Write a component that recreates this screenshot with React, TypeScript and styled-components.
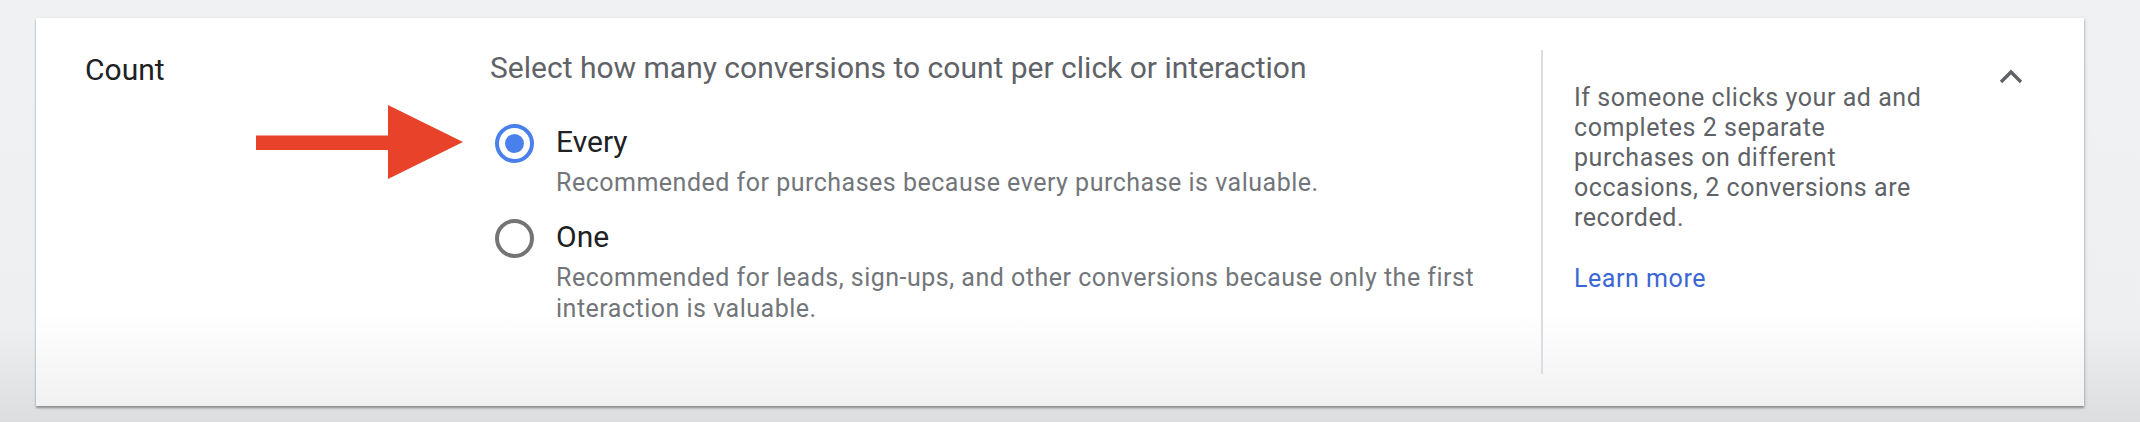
import React from "react";
import styled, { createGlobalStyle } from "styled-components";

const GlobalStyle = createGlobalStyle`
  html, body {
    margin: 0;
    padding: 0;
  }
  body {
    font-family: Roboto, "Noto Sans", "Liberation Sans", sans-serif;
    background: linear-gradient(to bottom, #f0f1f2 0%, #eeeff0 78%, #dcdddf 100%);
  }
`;

const Page = styled.div`
  width: 2140px;
  height: 422px;
  box-sizing: border-box;
  padding: 18px 56px 16px 36px;
`;

const Card = styled.section`
  position: relative;
  height: 388px;
  box-sizing: border-box;
  padding: 32px 0 32px 49px;
  display: flex;
  background: linear-gradient(to bottom, #ffffff 0%, #ffffff 76%, #f1f1f1 100%);
  box-shadow: 0 2px 2px rgba(0, 0, 0, 0.32), 1px 1px 4px rgba(0, 0, 0, 0.12);
`;

const LabelColumn = styled.div`
  width: 405px;
  flex-shrink: 0;
  font-size: 30px;
  line-height: 40px;
  color: #202124;
`;

const MainColumn = styled.div`
  flex: 1;
  padding-right: 40px;
`;

const Heading = styled.div`
  font-size: 30px;
  line-height: 36px;
  color: #5f6368;
`;

const Options = styled.div`
  margin-top: 36px;
  display: flex;
  flex-direction: column;
  gap: 19px;
`;

const Option = styled.label`
  display: grid;
  grid-template-columns: 48px 1fr;
  column-gap: 18px;
  cursor: pointer;
`;

const RadioCircle = styled.span<{ $checked?: boolean }>`
  grid-row: 1;
  justify-self: center;
  margin-top: 2px;
  width: 39px;
  height: 39px;
  box-sizing: border-box;
  border-radius: 50%;
  border: 4px solid ${(p) => (p.$checked ? "#4a80ec" : "#747474")};
  display: flex;
  align-items: center;
  justify-content: center;

  &::after {
    content: "";
    width: 19px;
    height: 19px;
    border-radius: 50%;
    background: #4a80ec;
    display: ${(p) => (p.$checked ? "block" : "none")};
  }
`;

const OptionTitle = styled.span`
  grid-column: 2;
  font-size: 30px;
  line-height: 40px;
  color: #202124;
`;

const OptionText = styled.span`
  grid-column: 2;
  margin-top: 4px;
  font-size: 25px;
  line-height: 31px;
  letter-spacing: 0.5px;
  color: #72767a;
`;

const SideColumn = styled.aside`
  width: 543px;
  flex-shrink: 0;
  box-sizing: border-box;
  border-left: 2px solid #dcdde0;
  padding: 0 61px 0 31px;
  display: flex;
  justify-content: space-between;
  align-items: flex-start;
`;

const SideText = styled.div`
  width: 356px;
  padding-top: 33px;
  font-size: 25px;
  line-height: 30px;
  letter-spacing: 0.55px;
  color: #5f6368;
`;

const LearnMore = styled.a`
  display: block;
  margin-top: 31px;
  color: #3b66d6;
  text-decoration: none;
`;

const Collapse = styled.button`
  margin-top: 17px;
  padding: 0;
  border: 0;
  background: none;
  width: 24px;
  height: 18px;
  display: flex;
  align-items: center;
  justify-content: center;
  cursor: pointer;
`;

const Arrow = styled.svg`
  position: absolute;
  left: 220px;
  top: 87px;
`;

export default function App() {
  return (
    <>
      <GlobalStyle />
      <Page>
        <Card>
          <LabelColumn>Count</LabelColumn>
          <MainColumn>
            <Heading>Select how many conversions to count per click or interaction</Heading>
            <Options>
              <Option>
                <RadioCircle $checked />
                <OptionTitle>Every</OptionTitle>
                <OptionText>Recommended for purchases because every purchase is valuable.</OptionText>
              </Option>
              <Option>
                <RadioCircle />
                <OptionTitle>One</OptionTitle>
                <OptionText>
                  Recommended for leads, sign-ups, and other conversions because only the first
                  interaction is valuable.
                </OptionText>
              </Option>
            </Options>
          </MainColumn>
          <SideColumn>
            <SideText>
              If someone clicks your ad and completes 2 separate purchases on different occasions,
              2 conversions are recorded.
              <LearnMore href="#">Learn more</LearnMore>
            </SideText>
            <Collapse aria-label="Collapse">
              <svg width="24" height="15" viewBox="0 0 24 15">
                <path d="M2 13 L12 3 L22 13" fill="none" stroke="#5f6368" strokeWidth="3.4" />
              </svg>
            </Collapse>
          </SideColumn>
          <Arrow width="207" height="74" viewBox="0 0 207 74">
            <rect x="0" y="30.5" width="134" height="14.5" fill="#e8432a" />
            <polygon points="132,0 207,37 132,74" fill="#e8432a" />
          </Arrow>
        </Card>
      </Page>
    </>
  );
}
